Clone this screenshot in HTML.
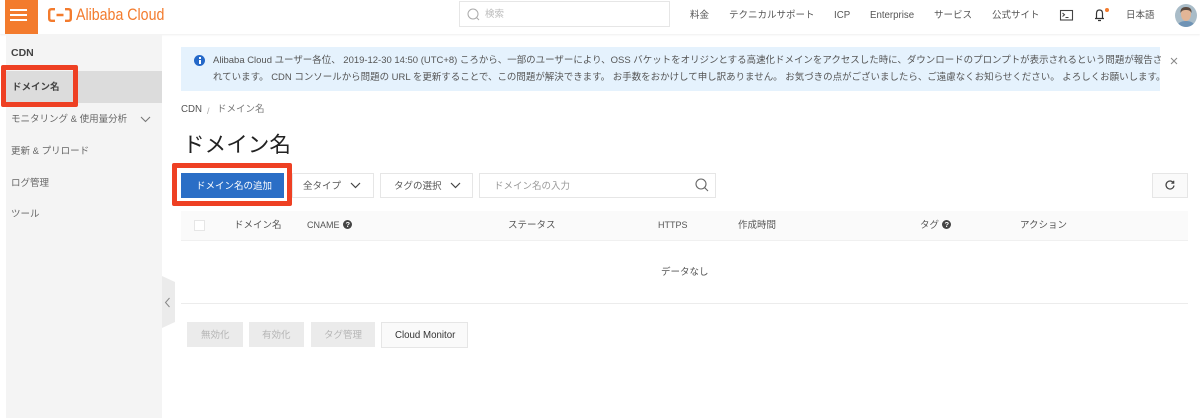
<!DOCTYPE html>
<html lang="ja"><head><meta charset="utf-8">
<style>
html,body{margin:0;padding:0;background:#fff}
#p{position:relative;width:1200px;height:418px;overflow:hidden;background:#fff;font-family:"Liberation Sans","Noto Sans CJK JP",sans-serif;color:#555;filter:blur(.3px)}
.a,.t{position:absolute}
.t{white-space:nowrap;line-height:14px;font-size:9.5px}
.l{font-size:9.7px}
svg{position:absolute;overflow:visible}
.b{position:absolute;box-sizing:border-box;border:1px solid #e6e6e6;background:#fff}
.d{position:absolute;background:#ebebeb;height:25px;top:322px}
</style></head><body><div id="p">
<!-- top bar -->
<div class="a" style="left:0;top:0;width:1200px;height:34px;background:#fff;box-shadow:0 1px 2px rgba(0,0,0,.07)"></div>
<div class="a" style="left:6px;top:34px;width:156px;height:384px;background:#f4f4f4"></div>
<div class="a" style="left:5px;top:0;width:33px;height:34px;background:#f37b2d"></div>
<div class="a" style="left:10px;top:8.500px;width:17px;height:2.500px;background:#fff"></div>
<div class="a" style="left:10px;top:13.500px;width:17px;height:2.500px;background:#fff"></div>
<div class="a" style="left:10px;top:18.500px;width:17px;height:2.500px;background:#fff"></div>
<svg style="left:48px;top:8px" width="24" height="14" viewBox="0 0 24 14" fill="none" stroke="#f37b2d" stroke-width="2.400"><path d="M7 1.200H3.500Q1.200 1.200 1.200 3.500V10.500Q1.200 12.800 3.500 12.800H7M17 1.200H20.500Q22.800 1.200 22.800 3.500V10.500Q22.800 12.800 20.500 12.800H17M8.500 7H15.500" /></svg>
<div class="t" style="left:76px;top:6px;font-size:16.500px;line-height:18px;color:#f37b2d;transform:scaleX(.86);transform-origin:0 0">Alibaba Cloud</div>

<!-- search -->
<div class="b" style="left:459px;top:1px;width:211px;height:26px"></div>
<svg style="left:467px;top:8px" width="13" height="13" fill="none" stroke="#aaa" stroke-width="1"><circle cx="6" cy="6" r="5"/><path d="M9.500 9.500L12 12"/></svg>
<div class="t" style="left:485px;top:8px;color:#bbb">検索</div>
<div class="t" style="left:690px;top:9px">料金</div>
<div class="t" style="left:729px;top:9px">テクニカルサポート</div>
<div class="t l" style="left:834px;top:9px">ICP</div>
<div class="t l" style="left:870px;top:9px">Enterprise</div>
<div class="t" style="left:934px;top:9px">サービス</div>
<div class="t" style="left:992px;top:9px">公式サイト</div>
<svg style="left:1060px;top:10px" width="13" height="11" fill="none" stroke="#444" stroke-width="1.100"><rect x=".5" y=".5" width="12" height="9.500"/><path d="M2.500 3L4.500 4.800L2.500 6.500M5.500 7.500H8.500"/></svg>
<svg style="left:1094px;top:8px" width="11" height="14" fill="none" stroke="#333" stroke-width="1.200"><path d="M1 10.500H10M2.500 10.500V5.500Q2.500 2 5.500 2Q8.500 2 8.500 5.500V10.500M4 12.500H7"/></svg>
<div class="a" style="left:1105px;top:8px;width:4px;height:4px;border-radius:50%;background:#f37b2d"></div>
<div class="t" style="left:1126px;top:9px">日本語</div>
<svg style="left:1175px;top:4px" width="22" height="23" viewBox="0 0 22 23"><defs><clipPath id="k"><ellipse cx="11" cy="11.500" rx="11" ry="11.500"/></clipPath></defs><g clip-path="url(#k)"><rect width="22" height="23" fill="#a9bcc8"/><path d="M2 23Q3 17 11 17Q19 17 20 23Z" fill="#6f93b5"/><ellipse cx="11" cy="10" rx="5" ry="7" fill="#e2b596"/><path d="M5.500 9Q5 3 11 3Q17 3 16.500 9Q15 5.500 11 6Q7 5.500 5.500 9Z" fill="#5a4a40"/></g></svg>

<!-- sidebar -->
<div class="t" style="left:11px;top:46px;font-size:10.500px;font-weight:bold;color:#444">CDN</div>
<div class="a" style="left:6px;top:71px;width:156px;height:32px;background:#dcdcdc"></div>
<div class="a" style="left:1px;top:65px;width:77px;height:42px;box-sizing:border-box;border:5px solid #ee4023;border-radius:2px"></div>
<div class="t" style="left:12px;top:81px;font-weight:bold;color:#444">ドメイン名</div>
<div class="t" style="left:11px;top:113px;color:#666">モニタリング &amp; 使用量分析</div>
<svg style="left:140px;top:116px" width="11" height="7" fill="none" stroke="#777" stroke-width="1.100"><path d="M1 1L5.500 5.500L10 1"/></svg>
<div class="t" style="left:11px;top:145px;color:#666">更新 &amp; プリロード</div>
<div class="t" style="left:11px;top:177px;color:#666">ログ管理</div>
<div class="t" style="left:11px;top:208px;color:#666">ツール</div>
<svg style="left:162px;top:276px" width="13" height="52"><path d="M0 0L13 6V46L0 52Z" fill="#ebebeb"/><path d="M7.500 22L3.500 26.500L7.500 31" fill="none" stroke="#888" stroke-width="1"/></svg>

<!-- notice -->
<div class="a" style="left:181px;top:47px;width:979px;height:44px;background:#e5f2fd"></div>
<div class="a" style="left:194px;top:55px;width:11px;height:11px;border-radius:50%;background:#2468c8"></div>
<div class="a" style="left:199px;top:57px;width:1.500px;height:1.500px;background:#fff"></div>
<div class="a" style="left:199px;top:59.500px;width:1.500px;height:4.500px;background:#fff"></div>
<div class="t" style="left:213px;top:54px;font-size:9.470px">Alibaba Cloud ユーザー各位、 2019-12-30 14:50 (UTC+8) ころから、一部のユーザーにより、OSS バケットをオリジンとする高速化ドメインをアクセスした時に、ダウンロードのプロンプトが表示されるという問題が報告さ</div>
<div class="t" style="left:213px;top:71px;font-size:9.470px">れています。 CDN コンソールから問題の URL を更新することで、この問題が解決できます。 お手数をおかけして申し訳ありません。 お気づきの点がございましたら、ご遠慮なくお知らせください。 よろしくお願いします。</div>
<svg style="left:1170px;top:57px" width="8" height="8" fill="none" stroke="#888" stroke-width="1"><path d="M1 1L7 7M7 1L1 7"/></svg>

<!-- breadcrumb + title -->
<div class="t l" style="left:181px;top:103px">CDN</div>
<div class="t" style="left:207px;top:104px;color:#aaa;font-size:9px">/</div>
<div class="t" style="left:217px;top:103px;color:#777">ドメイン名</div>
<div class="t" style="left:183px;top:131px;font-size:21.600px;line-height:28px;color:#222">ドメイン名</div>

<!-- toolbar -->
<div class="a" style="left:172px;top:163px;width:120px;height:43px;box-sizing:border-box;border:5px solid #ee4023;border-radius:2px;background:#fff"></div>
<div class="a" style="left:181px;top:173px;width:103px;height:25px;background:#2a6ec6"></div>
<div class="t" style="left:196px;top:180px;color:#fff">ドメイン名の追加</div>
<div class="b" style="left:292px;top:173px;width:82px;height:25px"></div>
<div class="t" style="left:303px;top:180px">全タイプ</div>
<svg style="left:350px;top:182px" width="11" height="7" fill="none" stroke="#444" stroke-width="1.200"><path d="M1 1L5.500 5.500L10 1"/></svg>
<div class="b" style="left:380px;top:173px;width:93px;height:25px"></div>
<div class="t" style="left:394px;top:180px">タグの選択</div>
<svg style="left:450px;top:182px" width="11" height="7" fill="none" stroke="#444" stroke-width="1.200"><path d="M1 1L5.500 5.500L10 1"/></svg>
<div class="b" style="left:479px;top:173px;width:237px;height:25px"></div>
<div class="t" style="left:494px;top:180px;color:#999">ドメイン名の入力</div>
<svg style="left:695px;top:178px" width="14" height="14" fill="none" stroke="#666" stroke-width="1.100"><circle cx="6" cy="6" r="5"/><path d="M9.500 9.500L13 13"/></svg>
<div class="b" style="left:1152px;top:173px;width:36px;height:25px;background:#fafafa"></div>
<svg style="left:1165px;top:180px" width="10" height="10" fill="none" stroke="#444" stroke-width="1.200"><path d="M8.500 3A4 4 0 1 0 9 5.500M8.700 .8V3.200H6.300"/></svg>

<!-- table -->
<div class="a" style="left:181px;top:211px;width:1007px;height:30px;background:#fafafa;border-bottom:1px solid #f0f0f0;box-sizing:border-box"></div>
<div class="b" style="left:194px;top:220px;width:11px;height:11px"></div>
<div class="t" style="left:234px;top:219px">ドメイン名</div>
<div class="t" style="left:307px;top:218px;font-size:9px">CNAME</div>
<div class="a" style="left:343px;top:220px;width:9px;height:9px;border-radius:50%;background:#444"></div>
<div class="t" style="left:345.500px;top:218px;color:#fff;font-size:7.500px;line-height:13px;font-weight:bold">?</div>
<div class="t" style="left:508px;top:219px">ステータス</div>
<div class="t" style="left:658px;top:218px;font-size:9px">HTTPS</div>
<div class="t" style="left:738px;top:219px">作成時間</div>
<div class="t" style="left:920px;top:219px">タグ</div>
<div class="a" style="left:942px;top:220px;width:9px;height:9px;border-radius:50%;background:#444"></div>
<div class="t" style="left:944.500px;top:218px;color:#fff;font-size:7.500px;line-height:13px;font-weight:bold">?</div>
<div class="t" style="left:1020px;top:219px">アクション</div>
<div class="t" style="left:661px;top:266px">データなし</div>
<div class="a" style="left:181px;top:303px;width:1007px;height:1px;background:#ececec"></div>

<!-- bottom buttons -->
<div class="d" style="left:187px;width:56px"></div>
<div class="t" style="left:201px;top:329px;color:#b5b5b5">無効化</div>
<div class="d" style="left:249px;width:55px"></div>
<div class="t" style="left:262px;top:329px;color:#b5b5b5">有効化</div>
<div class="d" style="left:311px;width:64px"></div>
<div class="t" style="left:324px;top:329px;color:#b5b5b5">タグ管理</div>
<div class="b" style="left:381px;top:322px;width:87px;height:26px;background:#fafafa"></div>
<div class="t l" style="left:395px;top:329px;color:#333">Cloud Monitor</div>
</div></body></html>
